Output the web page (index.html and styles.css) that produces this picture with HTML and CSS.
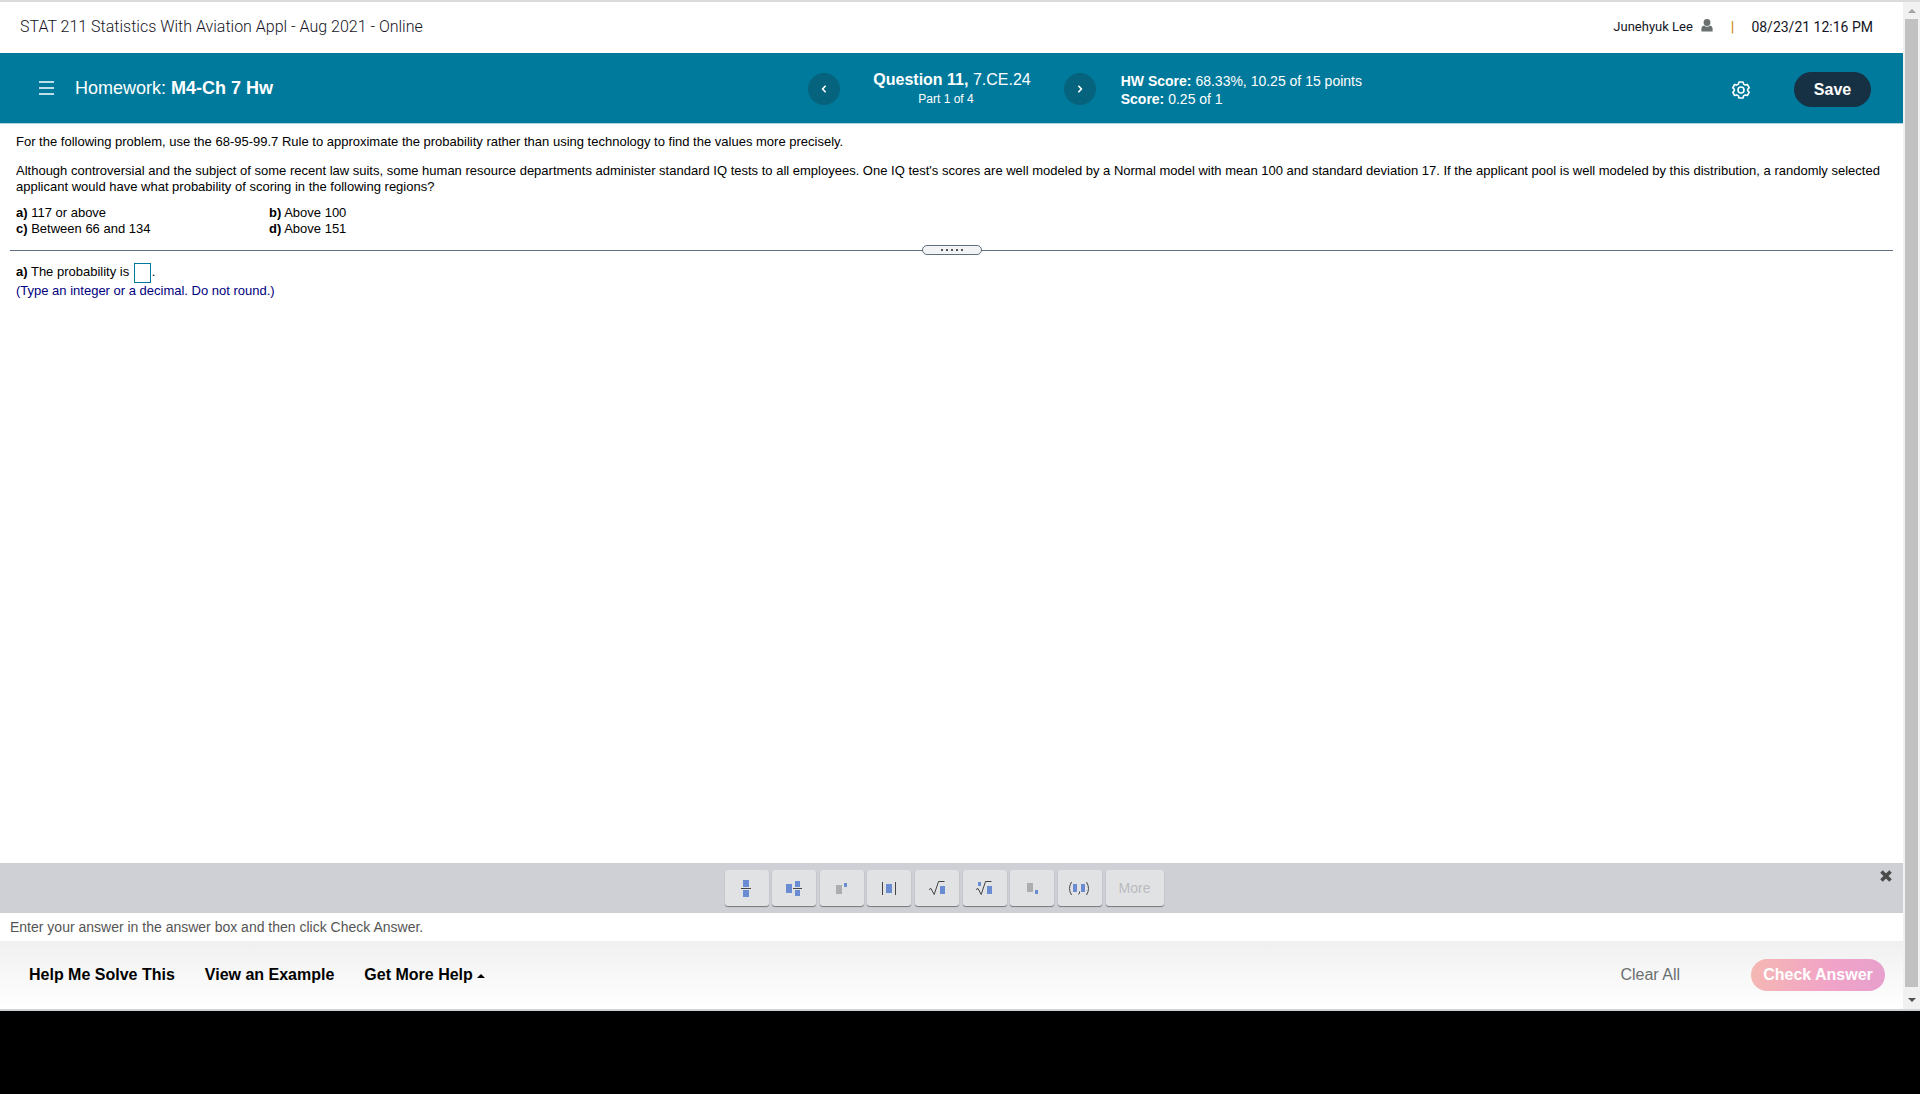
FILE: index.html
```html
<!DOCTYPE html>
<html lang="en">
<head>
  <meta charset="UTF-8">
  <title>Homework: M4-Ch 7 Hw</title>
  <link rel="stylesheet" href="styles.css">
</head>
<body>

  <div class="window">
    <div class="page">

      <!-- Course bar -->
      <header class="course-bar">
        <span class="course-name">STAT 211 Statistics With Aviation Appl - Aug 2021 - Online</span>
        <div class="account">
          <span class="user-name">Junehyuk Lee</span>
          <svg class="user-icon" width="12" height="13" viewBox="0 0 12 13">
            <circle cx="6" cy="3.5" r="3.4"/>
            <path d="M0.4 12.6V9.6Q0.4 7 3 6.4Q6 9 9 6.4Q11.6 7 11.6 9.6V12.6Z"/>
          </svg>
          <span class="divider">|</span>
          <span class="date">08/23/21 12:16 PM</span>
        </div>
      </header>

      <!-- Assignment banner -->
      <div class="banner">
        <div class="banner-left">
          <button class="menu-button" aria-label="Menu">
            <svg width="15" height="14" viewBox="0 0 15 14"><path d="M0 1h15M0 7h15M0 13h15" stroke="#fff" stroke-width="1.6"/></svg>
          </button>
          <h1 class="assignment">Homework: <b>M4-Ch 7 Hw</b></h1>
        </div>
        <div class="banner-nav">
          <button class="nav-button" aria-label="Previous question">
            <svg width="6" height="8" viewBox="0 0 6 8"><path d="M4.6 0.8L1.6 4l3 3.2"/></svg>
          </button>
          <div class="question">
            <div class="question-name"><b>Question 11,</b> 7.CE.24</div>
            <div class="question-part">Part 1 of 4</div>
          </div>
          <button class="nav-button" aria-label="Next question">
            <svg width="6" height="8" viewBox="0 0 6 8"><path d="M1.4 0.8L4.4 4l-3 3.2"/></svg>
          </button>
        </div>
        <div class="banner-right">
          <div class="score">
            <div><b>HW Score:</b> 68.33%, 10.25 of 15 points</div>
            <div><b>Score:</b> 0.25 of 1</div>
          </div>
          <button class="settings-button" aria-label="Settings">
            <svg width="18" height="18" viewBox="0 0 18 18" fill="none" stroke="#fff" stroke-width="1.6">
              <path stroke-linejoin="round" d="M7 1H11L11.6 3.1L13.3 4.1L15.4 3.5L17.2 6.8L15.7 8.3V9.7L17.2 11.2L15.4 14.5L13.3 13.9L11.6 14.9L11 17H7L6.4 14.9L4.7 13.9L2.6 14.5L0.8 11.2L2.3 9.7V8.3L0.8 6.8L2.6 3.5L4.7 4.1L6.4 3.1Z"/>
              <circle cx="9" cy="9" r="3"/>
            </svg>
          </button>
          <button class="save-button">Save</button>
        </div>
      </div>

      <!-- Question text -->
      <main class="content">
        <div class="problem">
          <p>For the following problem, use the 68-95-99.7 Rule to approximate the probability rather than using technology to find the values more precisely.</p>
          <p>Although controversial and the subject of some recent law suits, some human resource departments administer standard IQ tests to all employees. One IQ test's scores are well modeled by a Normal model with mean 100 and standard deviation 17. If the applicant pool is well modeled by this distribution, a randomly selected<br>applicant would have what probability of scoring in the following regions?</p>
          <div class="regions">
            <span><b>a)</b> 117 or above</span>
            <span><b>b)</b> Above 100</span>
            <span><b>c)</b> Between 66 and 134</span>
            <span><b>d)</b> Above 151</span>
          </div>
        </div>

        <div class="splitter">
          <button class="splitter-handle" aria-label="Resize panes"><i></i><i></i><i></i><i></i><i></i></button>
        </div>

        <div class="answer">
          <div class="answer-line"><label for="answer"><b>a)</b> The probability is</label> <input id="answer" class="answer-box" type="text">.</div>
          <div class="hint">(Type an integer or a decimal. Do not round.)</div>
        </div>
      </main>

      <!-- Math palette -->
      <div class="palette">
        <div class="palette-keys">
          <button class="key" aria-label="Fraction">
            <svg width="44" height="37" viewBox="0 0 44 37"><path class="blue" d="M18 10h6v7h-6zM18 20h6v7h-6z"/><path class="line" d="M16 18.5h10"/></svg>
          </button>
          <button class="key" aria-label="Mixed number">
            <svg width="44" height="37" viewBox="0 0 44 37"><path class="blue" d="M14 14h6v9h-6zM23 11h5v6h-5zM23 20h5v6h-5z"/><path class="line" d="M21 18.5h9"/></svg>
          </button>
          <button class="key" aria-label="Exponent">
            <svg width="44" height="37" viewBox="0 0 44 37"><path class="grey" d="M16 15h6v9h-6z"/><path class="blue" d="M24 13h3v4h-3z"/></svg>
          </button>
          <button class="key" aria-label="Absolute value">
            <svg width="44" height="37" viewBox="0 0 44 37"><path class="blue" d="M19 14h6v9h-6z"/><path class="line" d="M15.5 12v13M28.5 12v13"/></svg>
          </button>
          <button class="key" aria-label="Square root">
            <svg width="44" height="37" viewBox="0 0 44 37"><path class="blue" d="M25 16h5v8h-5z"/><path class="line" d="M14 19.5l2-1 3.2 6L23.5 11.5H29.5"/></svg>
          </button>
          <button class="key" aria-label="Nth root">
            <svg width="44" height="37" viewBox="0 0 44 37"><path class="blue" d="M24 16h5v8h-5zM15 12h3v4h-3z"/><path class="line" d="M13 19.5l2-1 3.2 6L22.5 11.5H28.5"/></svg>
          </button>
          <button class="key" aria-label="Subscript">
            <svg width="44" height="37" viewBox="0 0 44 37"><path class="grey" d="M17 13h6v9h-6z"/><path class="blue" d="M25 20h3v4h-3z"/></svg>
          </button>
          <button class="key" aria-label="Ordered pair">
            <svg width="44" height="37" viewBox="0 0 44 37"><path class="blue" d="M15 14h4v8h-4zM23 14h4v8h-4z"/><path class="line" d="M13.5 12Q9.5 18.5 13.5 25M28.5 12Q32.5 18.5 28.5 25M21.5 21.5v1.5l-1 1.5"/></svg>
          </button>
          <button class="key key-more" disabled>More</button>
        </div>
        <button class="palette-close" aria-label="Close">
          <svg width="12" height="12" viewBox="0 0 12 12"><path d="M1.5 1.5l9 9M10.5 1.5l-9 9" stroke="#4a4a4a" stroke-width="3.6"/></svg>
        </button>
      </div>

      <p class="instruction">Enter your answer in the answer box and then click Check Answer.</p>

      <!-- Footer actions -->
      <footer class="footer">
        <div class="help-links">
          <button class="help-link">Help Me Solve This</button>
          <button class="help-link">View an Example</button>
          <button class="help-link">Get More Help <i class="caret"></i></button>
        </div>
        <div class="actions">
          <button class="clear-button">Clear All</button>
          <button class="check-button">Check Answer</button>
        </div>
      </footer>
    </div>

    <div class="scrollbar">
      <i class="arrow arrow-up"></i>
      <div class="thumb"></div>
      <i class="arrow arrow-down"></i>
    </div>
  </div>

</body>
</html>
```
FILE: styles.css
```css
* {
  box-sizing: border-box;
}

body {
  display: flex;
  flex-direction: column;
  height: 100vh;
  margin: 0;
  padding-bottom: 83px;
  background: #000;
  color: #000;
  font-family: "Liberation Sans", Arial, sans-serif;
  font-size: 13px;
}

button {
  margin: 0;
  padding: 0;
  border: none;
  background: none;
  font-family: inherit;
  cursor: pointer;
}

svg {
  display: block;
}

.window {
  flex: 1;
  display: flex;
  border-top: 2px solid #dadcdc;
  border-bottom: 2px solid #d0d3d6;
  background: #fff;
}

.page {
  flex: 1;
  display: flex;
  flex-direction: column;
}

/* Course bar */
.course-bar {
  display: flex;
  justify-content: space-between;
  align-items: center;
  height: 51px;
  padding: 0 30px 2px 20px;
  color: #151525;
  font-family: Roboto, sans-serif;
}

.course-name {
  font-size: 16px;
  font-weight: 300;
}

.account {
  display: flex;
  align-items: center;
}

.user-name {
  font-size: 13px;
}

.user-icon {
  margin: 0 18px 2px 8px;
  fill: #6a7070;
}

.divider {
  margin-right: 17px;
  color: #d08a10;
  font-size: 14px;
  font-weight: bold;
}

.date {
  font-size: 14px;
}

/* Banner */
.banner {
  display: grid;
  grid-template-columns: 1fr auto 1fr;
  align-items: center;
  height: 71px;
  border-bottom: 1px solid #b5d3de;
  background: #007a9c;
  color: #fff;
}

.banner-left {
  display: flex;
  align-items: center;
  gap: 21px;
  padding-left: 39px;
}

.assignment {
  margin: 0;
  font-size: 18px;
  font-weight: normal;
}

.banner-nav {
  display: flex;
  align-items: center;
  gap: 33px;
  padding: 2px 0 0 1px;
}

.nav-button {
  display: flex;
  align-items: center;
  justify-content: center;
  width: 32px;
  height: 32px;
  border-radius: 50%;
  background: #05637e;
}

.nav-button path {
  fill: none;
  stroke: #fff;
  stroke-width: 1.6;
}

.question {
  text-align: center;
}

.question-name {
  font-size: 16px;
  line-height: 20px;
}

.question-part {
  padding-right: 12px;
  font-size: 12px;
  line-height: 18px;
}

.banner-right {
  display: flex;
  align-items: center;
  padding: 3px 32px 0 25px;
}

.score {
  flex: 1;
  font-size: 14px;
  line-height: 18px;
}

.settings-button {
  margin-right: 44px;
}

.save-button {
  width: 77px;
  height: 35px;
  border-radius: 18px;
  background: #163144;
  color: #fff;
  font-size: 16px;
  font-weight: bold;
}

/* Question */
.content {
  flex: 1;
  line-height: 16px;
}

.problem {
  padding: 10px 16px 8px;
}

.problem p {
  margin: 0 0 13px;
}

.problem p + p {
  margin-bottom: 10px;
}

.regions {
  display: grid;
  grid-template-columns: 253px 1fr;
}

.splitter {
  display: flex;
  align-items: center;
  justify-content: center;
  height: 10px;
  margin: 0 10px;
  background: linear-gradient(#5f6f80, #5f6f80) 0 5px / 100% 1px no-repeat;
}

.splitter-handle {
  display: flex;
  align-items: center;
  justify-content: center;
  gap: 3px;
  width: 60px;
  height: 10px;
  border: 1px solid #5f6f80;
  border-radius: 5px;
  background: #f2f3f4;
}

.splitter-handle i {
  width: 2px;
  height: 2px;
  background: #555;
}

.answer {
  padding: 7px 16px;
}

.answer-line {
  line-height: 20px;
}

.answer-box {
  width: 17px;
  height: 20px;
  margin: 0 1px;
  padding: 0;
  border: 1px solid #007a9c;
  vertical-align: middle;
}

.hint {
  color: #000080;
}

/* Math palette */
.palette {
  display: flex;
  align-items: flex-start;
  height: 50px;
  padding: 7px 11px 0 24px;
  background: #cfd0d6;
}

.palette-keys {
  flex: 1;
  padding-right: 16px;
  text-align: center;
}

.key {
  width: 44px;
  height: 36px;
  border-radius: 3px;
  background: #e1e2e4;
  box-shadow: 0 1px 1px #75777c;
  vertical-align: top;
}

.key-more {
  width: 58px;
  color: #b9bbbf;
  font-size: 14px;
}

.key .blue {
  fill: #6a8cd2;
}

.key .grey {
  fill: #adadad;
}

.key .line {
  fill: none;
  stroke: #444;
}

.instruction {
  margin: 0;
  padding-left: 10px;
  color: #555;
  font-size: 14px;
  line-height: 28px;
}

/* Footer */
.footer {
  display: flex;
  justify-content: space-between;
  align-items: center;
  height: 68px;
  padding: 0 18px 0 29px;
  background: linear-gradient(#f0f0f0, #fff);
}

.help-links,
.actions {
  display: flex;
  align-items: center;
}

.help-links {
  gap: 30px;
}

.help-link {
  font-size: 16px;
  font-weight: bold;
}

.caret {
  display: inline-block;
  border: 4px solid transparent;
  border-top: none;
  border-bottom-color: #000;
  vertical-align: middle;
}

.clear-button {
  margin-right: 71px;
  color: #6a7070;
  font-size: 16px;
}

.check-button {
  width: 134px;
  height: 32px;
  border-radius: 16px;
  background: linear-gradient(100deg, #f5b8b2, #f1a3c8 60%, #e6a0cc);
  color: #fff;
  font-size: 16px;
  font-weight: bold;
}

/* Scrollbar */
.scrollbar {
  display: flex;
  flex-direction: column;
  align-items: center;
  width: 17px;
  background: #f1f1f1;
}

.thumb {
  flex: 1;
  width: 13px;
  background: #c1c1c1;
}

.arrow {
  border: 4px solid transparent;
}

.arrow-up {
  margin: 7px 0 6px;
  border-top: none;
  border-bottom-color: #a3a3a3;
}

.arrow-down {
  margin: 11px 0 7px;
  border-bottom: none;
  border-top-color: #505050;
}
```
